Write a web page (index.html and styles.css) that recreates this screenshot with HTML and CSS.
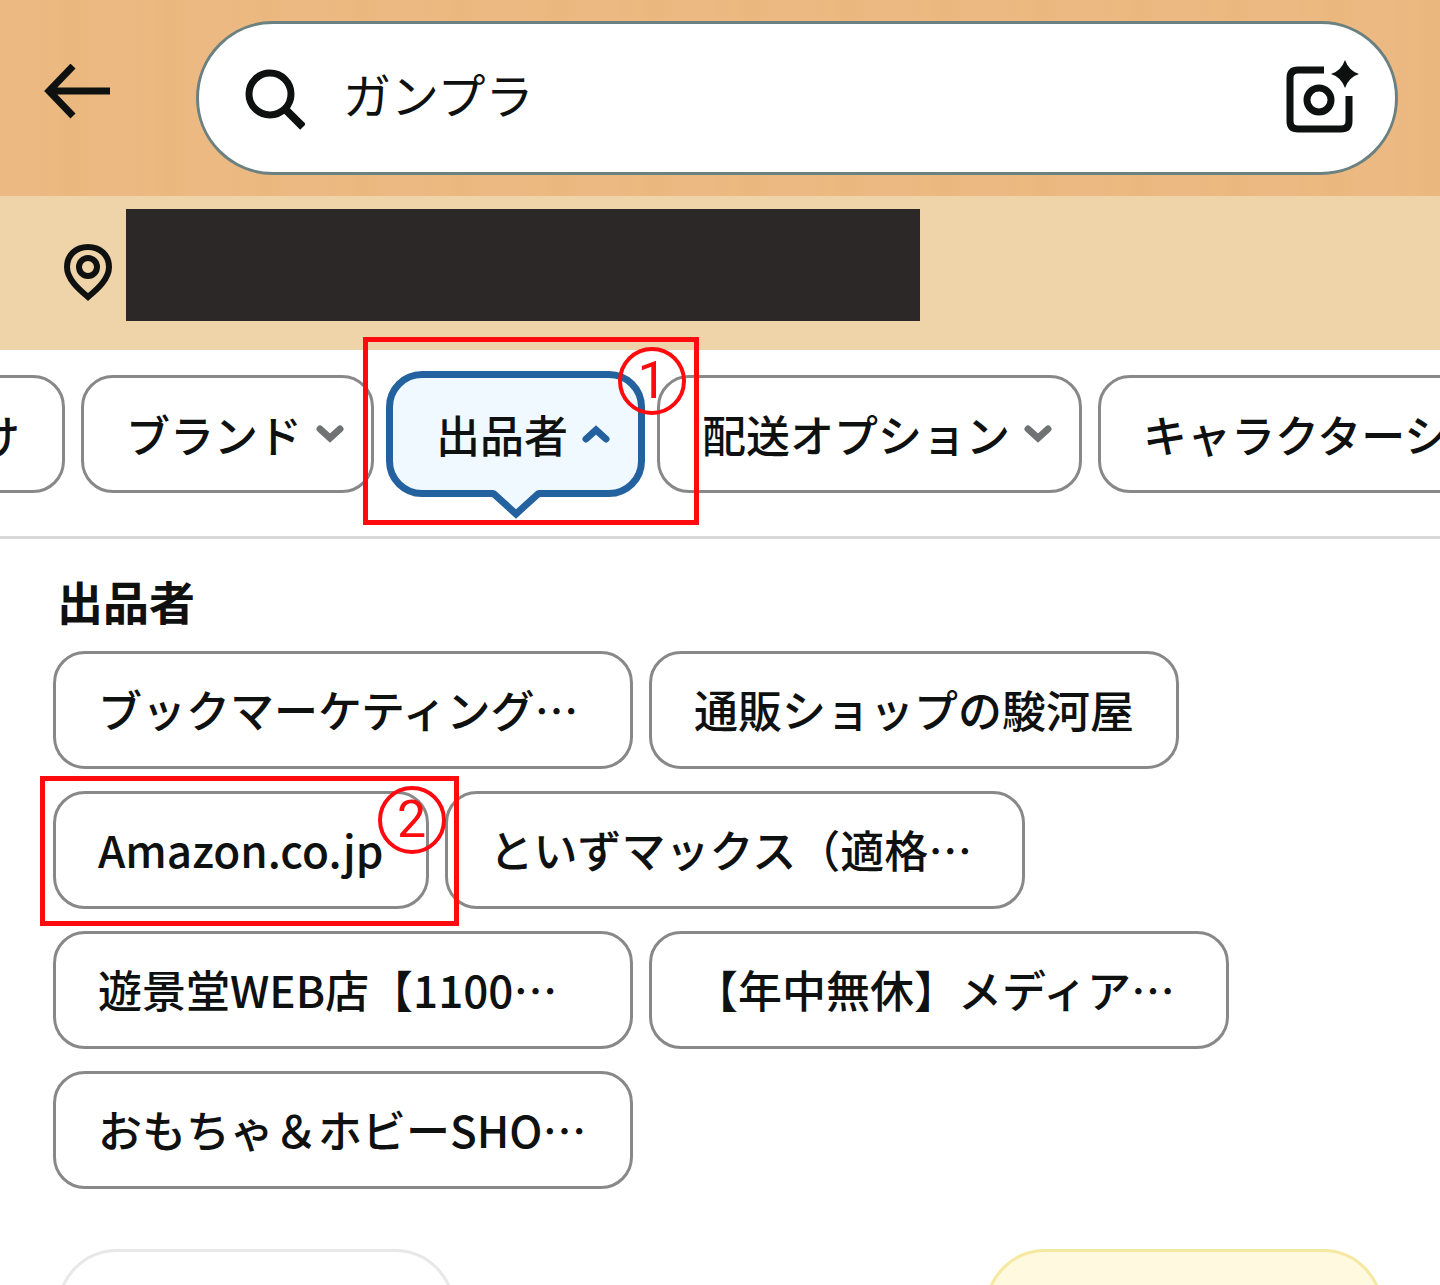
FILE: index.html
```html
<!DOCTYPE html>
<html lang="ja">
<head>
    <meta charset="UTF-8">
    <meta name="viewport" content="width=device-width, initial-scale=1.0">
    <title>ガンプラ - 出品者</title>
    <link rel="stylesheet" href="styles.css">
</head>
<body>
    <header class="header">
        <button class="icon-button back" aria-label="戻る">
            <svg width="68" height="56" viewBox="0 0 68 56" fill="none" stroke="#0f1111" stroke-width="7">
                <path d="M30 2L6 27L30 52M5 27H67"/>
            </svg>
        </button>
        <form class="search">
            <svg width="60" height="64" viewBox="0 0 60 64" fill="none" stroke="#0f1111" stroke-width="7">
                <circle cx="25" cy="28" r="21"/>
                <path d="M40 43L58 61" stroke-width="8"/>
            </svg>
            <input type="text" value="ガンプラ" aria-label="検索">
            <button type="button" class="icon-button" aria-label="カメラで検索">
                <svg width="75" height="76" viewBox="0 2 75 76" fill="none" stroke="#0f1111" stroke-width="7">
                    <path d="M39 12H13Q5 12 5 20V63Q5 71 13 71H56Q64 71 64 63V38"/>
                    <circle cx="34" cy="42" r="12"/>
                    <path d="M60 2Q64 13 74 16Q64 19 60 30Q56 19 46 16Q56 13 60 2Z" fill="#0f1111" stroke="none"/>
                </svg>
            </button>
        </form>
    </header>

    <div class="location">
        <svg width="48" height="60" viewBox="0 0 48 60" fill="none" stroke="#0f1111" stroke-width="6">
            <path d="M24 55C17 49 3 38 3 25C3 13 12 5 24 5S45 13 45 25C45 38 31 49 24 55Z"/>
            <circle cx="24" cy="25" r="9"/>
        </svg>
        <div class="address"></div>
    </div>

    <nav class="filters">
        <button class="chip">け</button>
        <button class="chip dropdown">ブランド
            <svg width="28" height="18" viewBox="0 0 28 18"><path d="M4 4L14 13L24 4"/></svg>
        </button>
        <div class="marked active-wrap">
            <button class="chip dropdown active">出品者
                <svg width="28" height="18" viewBox="0 0 28 18"><path d="M4 14L14 5L24 14"/></svg>
            </button>
            <svg class="tail" width="50" height="30" viewBox="0 0 50 30">
                <path d="M3 0H47L25 22Z" fill="#eff9ff"/>
                <path d="M2 3L25 24L48 3" fill="none" stroke="#23629f" stroke-width="7"/>
            </svg>
            <div class="marker marker-filter"><span>1</span></div>
        </div>
        <button class="chip dropdown">配送オプション
            <svg width="28" height="18" viewBox="0 0 28 18"><path d="M4 4L14 13L24 4"/></svg>
        </button>
        <button class="chip">キャラクターシリーズ</button>
    </nav>

    <main class="sellers">
        <h2>出品者</h2>
        <div class="chips">
            <button class="chip wide">ブックマーケティング…</button>
            <button class="chip">通販ショップの駿河屋</button>
            <div class="marked">
                <button class="chip">Amazon.co.jp</button>
                <div class="marker marker-seller"><span>2</span></div>
            </div>
            <button class="chip wide">といずマックス（適格…</button>
            <button class="chip wide">遊景堂WEB店【1100…</button>
            <button class="chip wide">【年中無休】メディア…</button>
            <button class="chip wide">おもちゃ＆ホビーSHO…</button>
        </div>
    </main>

    <footer class="actions">
        <button class="reset" aria-label="リセット"></button>
        <button class="apply" aria-label="結果を表示"></button>
    </footer>
</body>
</html>
```
FILE: styles.css
```css
* {
    box-sizing: border-box;
}
body {
    margin: 0;
    height: 100vh;
    overflow: hidden;
    display: flex;
    flex-direction: column;
    background: #fff;
    color: #0f1111;
    font-family: "Noto Sans CJK JP", sans-serif;
}
button, input {
    font-family: inherit;
    color: inherit;
}
svg {
    display: block;
    flex-shrink: 0;
}
.icon-button {
    padding: 0;
    border: 0;
    background: none;
}

/* header */
.header {
    display: flex;
    align-items: center;
    gap: 85px;
    padding: 21px 42px 21px 43px;
    background: repeating-linear-gradient(90deg, #ebb981 0, #ebb981 34px, #eab880 42px, #ecba81 56px, #eab77f 70px, #ebb981 97px);
}
.back {
    padding-bottom: 12px;
}
.search {
    flex: 1;
    display: flex;
    align-items: center;
    height: 154px;
    padding: 0 35px 0 46px;
    border: 3px solid #6b8080;
    border-radius: 77px;
    background: #fff;
}
.search input {
    flex: 1;
    min-width: 0;
    margin-left: 38px;
    padding: 0 0 10px;
    border: 0;
    outline: 0;
    background: none;
    font-size: 48px;
    line-height: 72px;
}

/* delivery address */
.location {
    display: flex;
    align-items: center;
    gap: 14px;
    padding: 13px 64px 29px;
    background: #f0d4a9;
}
.location svg {
    margin-top: 14px;
}
.address {
    width: 794px;
    height: 112px;
    background: #2d2828;
}

/* chips */
.chip {
    flex-shrink: 0;
    height: 118px;
    padding: 0 42px;
    border: 3px solid #888;
    border-radius: 32px;
    background: #fff;
    font-size: 44px;
    font-weight: 500;
    line-height: 64px;
    text-align: left;
    white-space: nowrap;
}
.wide {
    width: 580px;
}
.dropdown {
    display: flex;
    align-items: center;
    gap: 14px;
    padding-right: 27px;
}
.dropdown path {
    fill: none;
    stroke: #6f7373;
    stroke-width: 7;
    stroke-linecap: round;
}
.active {
    height: 126px;
    padding: 0 28px 0 43px;
    border: 7px solid #23629f;
    border-radius: 36px;
    background: #eff9ff;
}
.active path {
    stroke: #23629f;
}

/* filter bar, scrolled part of the way */
.filters {
    display: flex;
    align-items: center;
    gap: 16px;
    margin-left: -69px;
    padding: 21px 0 39px;
    border-bottom: 3px solid #d8d8d8;
}
.marked {
    position: relative;
    flex-shrink: 0;
}
.active-wrap {
    margin: 0 -4px;
}
.tail {
    position: absolute;
    bottom: -23px;
    left: 50%;
    margin-left: -25px;
}

/* numbered red marks */
.marker {
    position: absolute;
    z-index: 1;
    border: 5px solid #ff0a0f;
    pointer-events: none;
}
.marker-filter {
    inset: -34px -54px -28px -23px;
}
.marker-seller {
    inset: -15px -30px -17px -13px;
}
.marker span {
    position: absolute;
    top: 5px;
    right: 8px;
    width: 68px;
    height: 68px;
    border: 4px solid #ff0a0f;
    border-radius: 50%;
    color: #ff0a0f;
    font-family: Roboto, sans-serif;
    font-size: 52px;
    line-height: 60px;
    text-align: center;
}

/* seller list */
.sellers {
    padding: 31px 53px 0;
}
.sellers h2 {
    margin: 0 4px 21px;
    font-size: 46px;
    line-height: 60px;
}
.chips {
    display: flex;
    flex-wrap: wrap;
    gap: 22px 16px;
}
.chips .chip {
    padding-bottom: 3px;
}

/* bottom buttons, cut off by the screen edge */
.actions {
    display: flex;
    justify-content: space-between;
    padding: 60px 57px 0;
}
.actions button {
    width: 30%;
    height: 120px;
    border: 3px solid #e8e8e8;
    border-radius: 60px;
    background: #fff;
}
.actions .apply {
    border-color: #f5e8a0;
    background: #fff9df;
}
```
